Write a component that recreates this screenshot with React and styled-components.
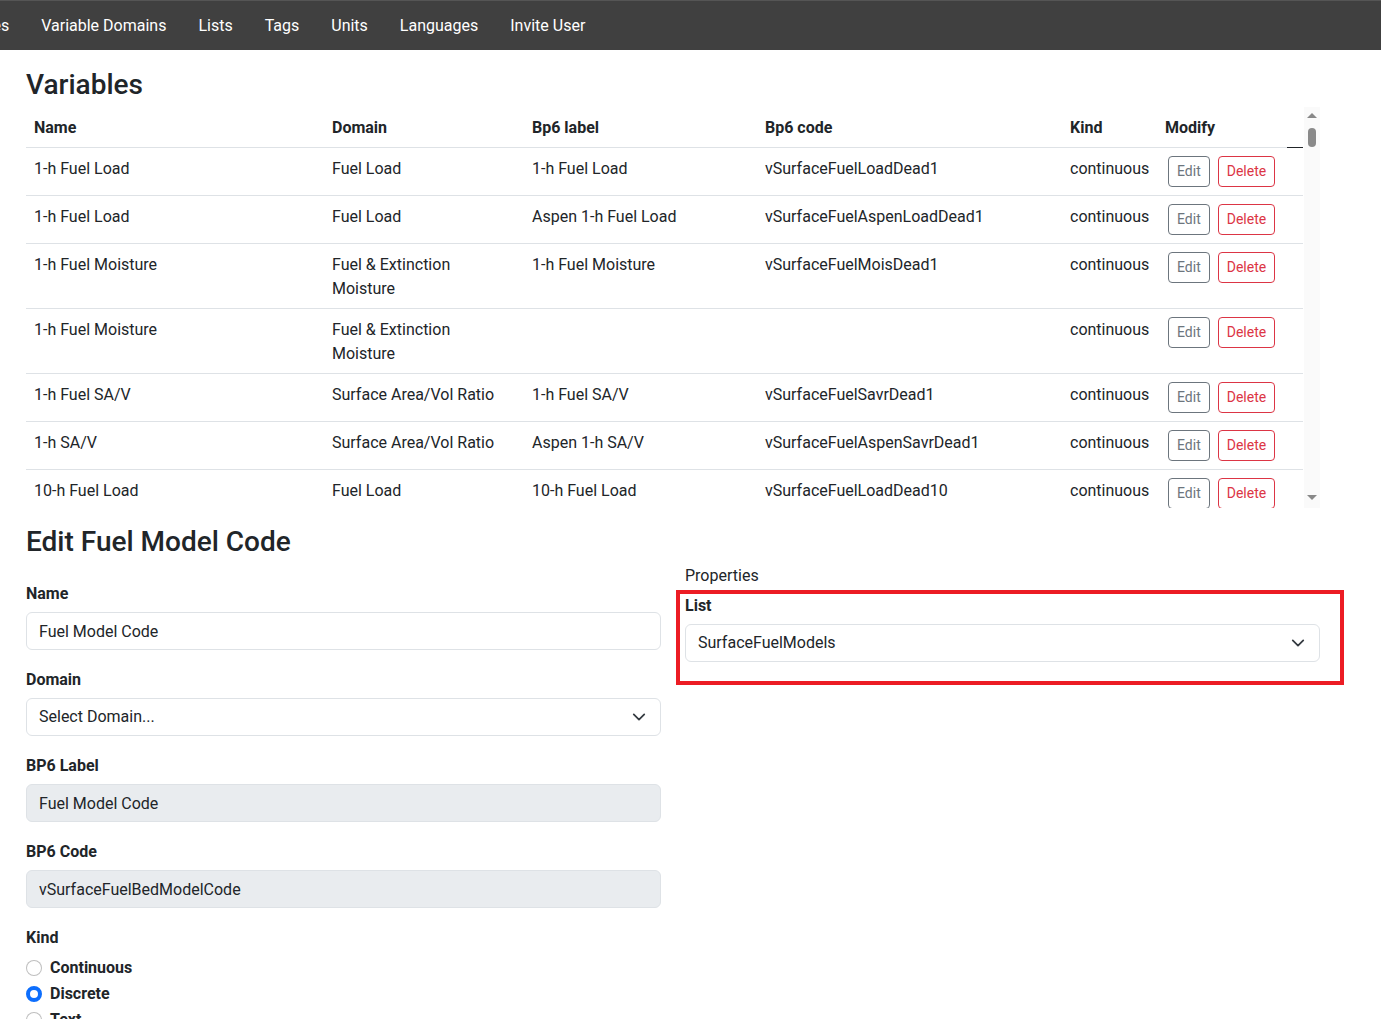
import React from "react";
import styled, { createGlobalStyle } from "styled-components";

const GlobalStyle = createGlobalStyle`
  * { box-sizing: border-box; }
  body {
    margin: 0;
    font-family: "Segoe UI", Roboto, "Noto Sans", sans-serif;
    font-size: 16px;
    line-height: 1.5;
    color: #212529;
    background: #fff;
    overflow: hidden;
  }
`;

const navItems = ["Variables", "Variable Domains", "Lists", "Tags", "Units", "Languages", "Invite User"];

const variables = [
    { name: "1-h Fuel Load", domain: "Fuel Load", label: "1-h Fuel Load", code: "vSurfaceFuelLoadDead1" },
    { name: "1-h Fuel Load", domain: "Fuel Load", label: "Aspen 1-h Fuel Load", code: "vSurfaceFuelAspenLoadDead1" },
    { name: "1-h Fuel Moisture", domain: "Fuel & Extinction Moisture", label: "1-h Fuel Moisture", code: "vSurfaceFuelMoisDead1" },
    { name: "1-h Fuel Moisture", domain: "Fuel & Extinction Moisture", label: "", code: "" },
    { name: "1-h Fuel SA/V", domain: "Surface Area/Vol Ratio", label: "1-h Fuel SA/V", code: "vSurfaceFuelSavrDead1" },
    { name: "1-h SA/V", domain: "Surface Area/Vol Ratio", label: "Aspen 1-h SA/V", code: "vSurfaceFuelAspenSavrDead1" },
    { name: "10-h Fuel Load", domain: "Fuel Load", label: "10-h Fuel Load", code: "vSurfaceFuelLoadDead10" },
    { name: "10-h Fuel Moisture", domain: "Fuel & Extinction Moisture", label: "10-h Fuel Moisture", code: "vSurfaceFuelMoisDead10" },
    { name: "100-h Fuel Load", domain: "Fuel Load", label: "100-h Fuel Load", code: "vSurfaceFuelLoadDead100" },
];

const Chevron = () => (
    <svg width="16" height="16" viewBox="0 0 16 16">
        <path d="M2 5l6 6 6-6" fill="none" stroke="#343a40" strokeWidth="2" strokeLinecap="round" strokeLinejoin="round" />
    </svg>
);

const App = () => (
    <>
        <GlobalStyle />
        <NavBar>
            <NavList>
                {navItems.map((item) => (
                    <NavLink key={item}>{item}</NavLink>
                ))}
            </NavList>
        </NavBar>

        <Content>
            <PageTitle>Variables</PageTitle>
            <TableFrame>
                <TableViewport>
                    <Table>
                        <colgroup>
                            <col style={{ width: 298 }} />
                            <col style={{ width: 200 }} />
                            <col style={{ width: 233 }} />
                            <col style={{ width: 305 }} />
                            <col style={{ width: 95 }} />
                            <col style={{ width: 130 }} />
                            <col style={{ width: 16 }} />
                        </colgroup>
                        <thead>
                            <tr>
                                <Th>Name</Th>
                                <Th>Domain</Th>
                                <Th>Bp6 label</Th>
                                <Th>Bp6 code</Th>
                                <Th>Kind</Th>
                                <Th>Modify</Th>
                                <Th $dark />
                            </tr>
                        </thead>
                        <tbody>
                            {variables.map((v, i) => (
                                <tr key={i}>
                                    <Td>{v.name}</Td>
                                    <Td>{v.domain}</Td>
                                    <Td>{v.label}</Td>
                                    <Td>{v.code}</Td>
                                    <Td>continuous</Td>
                                    <Td $actions>
                                        <ButtonGroup>
                                            <OutlineButton $color="#6c757d">Edit</OutlineButton>
                                            <OutlineButton $color="#dc3545">Delete</OutlineButton>
                                        </ButtonGroup>
                                    </Td>
                                    <Td />
                                </tr>
                            ))}
                        </tbody>
                    </Table>
                </TableViewport>
                <ScrollBar>
                    <Arrow $up />
                    <Thumb />
                    <ScrollSpacer />
                    <Arrow />
                </ScrollBar>
            </TableFrame>

            <PageTitle $spaced>Edit Fuel Model Code</PageTitle>
            <FormRow>
                <FormColumn $offset>
                    <Field>
                        <Label>Name</Label>
                        <Input defaultValue="Fuel Model Code" />
                    </Field>
                    <Field>
                        <Label>Domain</Label>
                        <Select>
                            <span>Select Domain...</span>
                            <Chevron />
                        </Select>
                    </Field>
                    <Field>
                        <Label>BP6 Label</Label>
                        <Input disabled defaultValue="Fuel Model Code" />
                    </Field>
                    <Field>
                        <Label>BP6 Code</Label>
                        <Input disabled defaultValue="vSurfaceFuelBedModelCode" />
                    </Field>
                    <Field>
                        <Label>Kind</Label>
                        <RadioRow>
                            <Radio />
                            <RadioText>Continuous</RadioText>
                        </RadioRow>
                        <RadioRow>
                            <Radio $checked />
                            <RadioText>Discrete</RadioText>
                        </RadioRow>
                        <RadioRow>
                            <Radio />
                            <RadioText>Text</RadioText>
                        </RadioRow>
                    </Field>
                </FormColumn>
                <FormColumn>
                    <SectionLabel>Properties</SectionLabel>
                    <Highlighted>
                        <Label>List</Label>
                        <Select>
                            <span>SurfaceFuelModels</span>
                            <Chevron />
                        </Select>
                    </Highlighted>
                </FormColumn>
            </FormRow>
        </Content>
    </>
);

const NavBar = styled.nav`
    height: 50px;
    background-color: #404040;
    border-top: 1px solid #555;
    display: flex;
    align-items: center;
    overflow: hidden;
`

const NavList = styled.div`
    display: flex;
    margin-left: -73px;
    white-space: nowrap;
`

const NavLink = styled.a`
    padding: 0 16px;
    color: #fff;
    font-size: 16px;
    line-height: 24px;
    cursor: pointer;
`

const Content = styled.main`
    width: 1294px;
    margin-left: 26px;
    padding-top: 18px;
`

const PageTitle = styled.h3`
    margin: ${(p) => (p.$spaced ? "17px 0 6px" : "0 0 5px")};
    font-size: 28px;
    font-weight: 500;
    line-height: 1.2;
`

const TableFrame = styled.div`
    display: flex;
    height: 401px;
`

const TableViewport = styled.div`
    flex: 1;
    overflow: hidden;
`

const Table = styled.table`
    width: 1277px;
    table-layout: fixed;
    border-collapse: collapse;
`

const Th = styled.th`
    text-align: left;
    font-weight: 700;
    padding: 9px 8px 7px;
    line-height: 24px;
    border-bottom: 1px solid ${(p) => (p.$dark ? "#212529" : "#dee2e6")};
`

const Td = styled.td`
    padding: ${(p) => (p.$actions ? "8px" : "9px 8px 7px")};
    line-height: 24px;
    vertical-align: top;
    border-bottom: 1px solid #dee2e6;
`

const ButtonGroup = styled.div`
    display: flex;
    gap: 8px;
    padding-left: 3px;
`

const OutlineButton = styled.button`
    font-family: inherit;
    font-size: 14px;
    line-height: 21px;
    padding: 4px 8px;
    color: ${(p) => p.$color};
    background: transparent;
    border: 1px solid ${(p) => p.$color};
    border-radius: 4px;
`

const ScrollBar = styled.div`
    width: 16px;
    background: #fafafa;
    display: flex;
    flex-direction: column;
    align-items: center;
    padding: 4px 0;
`

const Arrow = styled.div`
    width: 0;
    height: 0;
    border-left: 5px solid transparent;
    border-right: 5px solid transparent;
    ${(p) => (p.$up ? "border-bottom: 5px solid #888;" : "border-top: 5px solid #888;")}
    margin: ${(p) => (p.$up ? "2px 0 10px" : "0 0 4px")};
`

const Thumb = styled.div`
    width: 8px;
    height: 19px;
    border-radius: 4px;
    background: #8a8a8a;
`

const ScrollSpacer = styled.div`
    flex: 1;
`

const FormRow = styled.div`
    display: grid;
    grid-template-columns: 635px 635px;
    column-gap: 24px;
`

const FormColumn = styled.div`
    padding-top: ${(p) => (p.$offset ? "16px" : "0")};
`

const Field = styled.div`
    margin-bottom: 16px;
`

const Label = styled.div`
    font-weight: 700;
    line-height: 24px;
    padding-top: 2px;
    margin-bottom: 6px;
`

const SectionLabel = styled.div`
    font-weight: 400;
    line-height: 24px;
    margin-bottom: 4px;
`

const Input = styled.input`
    display: block;
    width: 100%;
    height: 38px;
    padding: 6px 12px;
    font-family: inherit;
    font-size: 16px;
    color: #212529;
    background: ${(p) => (p.disabled ? "#e9ecef" : "#fff")};
    border: 1px solid #dee2e6;
    border-radius: 6px;
    &:disabled { color: #212529; }
`

const Select = styled.div`
    display: flex;
    align-items: center;
    justify-content: space-between;
    height: 38px;
    padding: 6px 14px 6px 12px;
    border: 1px solid #dee2e6;
    border-radius: 6px;
    background: #fff;
    svg { width: 14px; height: 14px; }
`

const Highlighted = styled.div`
    position: relative;
    &::after {
        content: "";
        position: absolute;
        left: -9px;
        right: -24px;
        top: -2px;
        bottom: -23px;
        border: 4px solid #ec1c24;
        pointer-events: none;
    }
`

const RadioRow = styled.div`
    display: flex;
    align-items: center;
    gap: 8px;
    min-height: 24px;
    margin-bottom: 2px;
    &:first-of-type { margin-top: 1px; }
`

const Radio = styled.span`
    width: 16px;
    height: 16px;
    border-radius: 50%;
    border: ${(p) => (p.$checked ? "4px solid #0d6efd" : "1px solid rgba(0,0,0,.25)")};
    background: #fff;
`

const RadioText = styled.span`
    font-weight: 700;
`

export default App;
